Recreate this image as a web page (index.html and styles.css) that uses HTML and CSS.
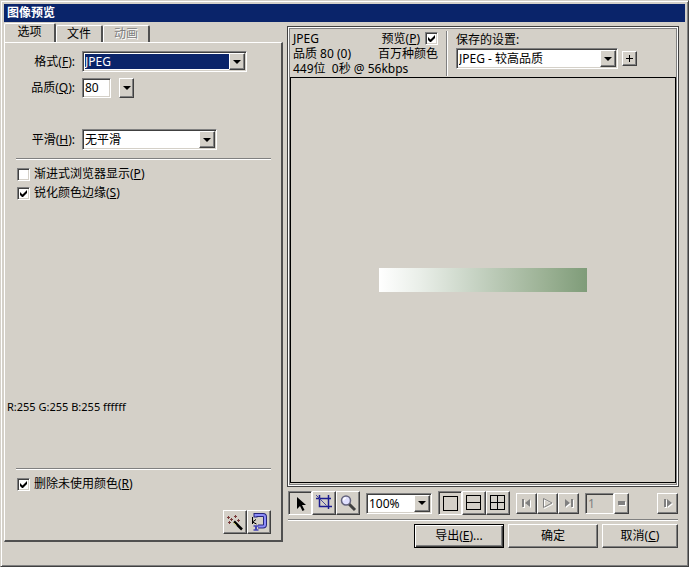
FILE: index.html
```html
<!DOCTYPE html>
<html lang="zh-CN">
<head>
	<meta charset="UTF-8">
	<title>图像预览</title>
<link rel="stylesheet" href="styles.css">
</head>
<body>
	<div class="dialog">
		<h1 class="title">图像预览</h1>
		<div class="main">
			<div class="side">
				<div class="tabs">
					<button class="tab active">选项</button>
					<button class="tab">文件</button>
					<button class="tab" disabled>动画</button>
				</div>
				<div class="panel">
					<div class="field">
						<label for="format">格式(<u>F</u>):</label>
						<div class="combo combo-format">
							<select id="format" class="selected"><option>JPEG</option></select>
							<span class="arrow"></span>
						</div>
					</div>
					<div class="field">
						<label for="quality">品质(<u>Q</u>):</label>
						<input type="text" id="quality" class="quality" value="80">
						<button class="drop" aria-label="品质"></button>
					</div>
					<div class="field field-smooth">
						<label for="smooth">平滑(<u>H</u>):</label>
						<div class="combo combo-smooth">
							<select id="smooth"><option>无平滑</option></select>
							<span class="arrow"></span>
						</div>
					</div>
					<hr>
					<label class="check"><input type="checkbox"><span>渐进式浏览器显示(<u>P</u>)</span></label>
					<label class="check"><input type="checkbox" checked><span>锐化颜色边缘(<u>S</u>)</span></label>
					<p class="rgb">R:255 G:255 B:255 ffffff</p>
					<hr>
					<label class="check"><input type="checkbox" checked><span>删除未使用颜色(<u>R</u>)</span></label>
					<div class="side-tools">
						<button class="tool" aria-label="导出向导">
							<svg width="20" height="20" viewBox="0 0 20 20">
								<path d="M2 5.500h3M3.500 4v3M9 4.500h3M10.500 3v3M5 7.500h3M6.500 6v3M12 8.500h3M13.500 7v3M3 10.500h3M4.500 9v3" stroke="#7a3b3b" fill="none"/>
								<path d="M9 9.500l8 8" stroke="#000" stroke-width="2.500"/>
								<path d="M8.500 10.500l3 3" stroke="#c8c860"/>
							</svg>
						</button>
						<button class="tool" aria-label="优化到指定大小">
							<svg width="20" height="20" viewBox="0 0 20 20">
								<path d="M6.500 5.500V3h7.500q2 0 2 2v7.500q0 2-2 2H9" fill="none" stroke="#26267c" stroke-width="4"/>
								<path d="M6.500 4.500V3h7.500q2 0 2 2v7.500q0 2-2 2H9" fill="none" stroke="#8c8cf8" stroke-width="2"/>
								<path d="M4.500 14h5M4.500 18h5" fill="none" stroke="#4646b4" stroke-width="1.500"/>
								<path d="M7 14v4" fill="none" stroke="#4646b4" stroke-width="2"/>
								<path d="M3.500 5v7M7 7.500L3.500 10L7.500 12" fill="none" stroke="#000"/>
							</svg>
						</button>
					</div>
				</div>
			</div>

			<div class="content">
				<div class="preview">
					<div class="info">
						<div class="stats">
							<div class="stat"><span>JPEG</span><label class="check-right">预览(<u>P</u>)<input type="checkbox" checked></label></div>
							<div class="stat"><span>品质 80 (0)</span><span>百万种颜色</span></div>
							<div class="stat"><span>449位&nbsp; 0秒 @ 56kbps</span></div>
						</div>
						<div class="saved">
							<label for="saved">保存的设置:</label>
							<div class="saved-row">
								<div class="combo combo-saved">
									<select id="saved"><option>JPEG - 较高品质</option></select>
									<span class="arrow"></span>
								</div>
								<button class="plus" aria-label="保存当前设置">
									<svg width="9" height="9" viewBox="0 0 9 9" shape-rendering="crispEdges"><path d="M1 4h7v1H1zM4 1h1v7H4z"/></svg>
								</button>
							</div>
						</div>
					</div>
					<div class="canvas"><div class="image"></div></div>
				</div>

				<div class="toolbar">
					<div class="group">
						<button class="tool pressed" aria-label="指针">
							<svg width="20" height="20" viewBox="0 0 20 20"><path d="M7 4v12l3-3l2.500 5l2-1l-2.500-5h4z"/></svg>
						</button>
						<button class="tool" aria-label="裁剪">
							<svg width="20" height="20" viewBox="0 0 20 20"><path d="M5.500 2v11.500H18M2 5.500h15M14.500 2v14" fill="none" stroke="#1c1c90" stroke-width="1.500"/><path d="M2 2l10.500 10.500" stroke="#4a4a9c"/></svg>
						</button>
						<button class="tool" aria-label="缩放">
							<svg width="20" height="20" viewBox="0 0 20 20"><path d="M11 11l6 6" stroke="#404040" stroke-width="3"/><circle cx="8" cy="7.500" r="4.500" fill="#e0e0ff" stroke="#62627c" stroke-width="1.500"/><path d="M5.500 7.500q0-2.500 2.500-2.500" fill="none" stroke="#fff" stroke-width="1.500"/></svg>
						</button>
					</div>
					<div class="combo combo-zoom">
						<select aria-label="缩放比例"><option>100%</option></select>
						<span class="arrow"></span>
					</div>
					<div class="group">
						<button class="tool pressed" aria-label="1 个预览窗口">
							<svg width="16" height="16" viewBox="0 0 16 16" shape-rendering="crispEdges"><path d="M1.500 1.500h14v14h-14z" fill="none" stroke="#000"/></svg>
						</button>
						<button class="tool" aria-label="2 个预览窗口">
							<svg width="16" height="16" viewBox="0 0 16 16" shape-rendering="crispEdges"><path d="M.5 .5h14v14H.5zM.5 7.500h14" fill="none" stroke="#000"/></svg>
						</button>
						<button class="tool" aria-label="4 个预览窗口">
							<svg width="16" height="16" viewBox="0 0 16 16" shape-rendering="crispEdges"><path d="M.5 .5h14v14H.5zM.5 7.500h14M7.500 .5v14" fill="none" stroke="#000"/></svg>
						</button>
					</div>
					<div class="group">
						<button class="play" disabled aria-label="第一帧">
							<svg width="12" height="12" viewBox="0 0 12 12"><path d="M2 3h2v8H2zM10 3v8L5 7z" fill="#fff"/><path d="M1 2h2v8H1zM9 2v8L4 6z"/></svg>
						</button>
						<button class="play" disabled aria-label="播放">
							<svg width="12" height="12" viewBox="0 0 12 12"><path d="M2.500 2.500v9L11 7z" fill="none" stroke="#fff"/><path d="M1.500 1.500v9L10 6z" fill="none" stroke="#808080"/></svg>
						</button>
						<button class="play" disabled aria-label="最后一帧">
							<svg width="12" height="12" viewBox="0 0 12 12"><path d="M3 3v8l5-4zM9 3h2v8H9z" fill="#fff"/><path d="M2 2v8l5-4zM8 2h2v8H8z"/></svg>
						</button>
					</div>
					<div class="group frame">
						<input type="text" value="1" disabled aria-label="帧">
						<button class="bar" disabled aria-label="选择帧"><svg width="8" height="5" viewBox="0 0 8 5"><path d="M1 1h7v4H1z" fill="#fff"/><path d="M0 0h7v4H0z"/></svg></button>
					</div>
					<button class="play last" disabled aria-label="下一帧">
						<svg width="12" height="12" viewBox="0 0 12 12"><path d="M3 3h2v8H3zM6 3v8l5-4z" fill="#fff"/><path d="M2 2h2v8H2zM5 2v8l5-4z"/></svg>
					</button>
				</div>
				<hr>
				<div class="actions">
					<button class="btn default">导出(<u>E</u>)...</button>
					<button class="btn">确定</button>
					<button class="btn cancel">取消(<u>C</u>)</button>
				</div>
			</div>
		</div>
	</div>
</body>
</html>
```
FILE: styles.css
```css
*{box-sizing: border-box;}
body,h1,p,button,input,select{padding: 0;margin: 0;}
body,button,input,select{
	font-family: "Noto Sans","Noto Sans CJK SC",sans-serif;
	font-size: 12px;
	line-height: 16px;
	color: #000;
}
body{background: #d4d0c8;}
svg{display: block;}
u{text-underline-offset: 1px;}
hr{
	width: 100%;
	margin: 0;
	border: 0;
	border-top: 1px solid #808080;
	border-bottom: 1px solid #fff;
}
.dialog{
	min-height: 100vh;
	display: flex;
	flex-direction: column;
	padding: 3px 3px 0 3px;
	border: 1px solid #d4d0c8;
	border-right-color: #404040;
	border-bottom-color: #404040;
	box-shadow: inset 1px 1px #fff, inset -1px -1px #808080;
}
.title{
	height: 18px;
	padding-left: 3px;
	line-height: 18px;
	font-size: 12px;
	font-weight: bold;
	color: #fff;
	background: #0a246a;
}
.main{
	flex: 1;
	display: flex;
	gap: 4px;
}
/* 左侧选项 */
.side{
	width: 279px;
	display: flex;
	flex-direction: column;
	padding-bottom: 24px;
}
.tabs{
	height: 20px;
	display: flex;
	align-items: flex-end;
}
.tab{
	width: 47px;
	height: 17px;
	border: 1px solid #fff;
	border-right: 2px solid #505050;
	border-bottom: 0;
	border-radius: 2px 2px 0 0;
	background: #d4d0c8;
}
.tab.active{
	width: 52px;
	height: 20px;
	margin-bottom: -1px;
	padding-bottom: 3px;
}
.tab:disabled{
	color: #808080;
	text-shadow: 1px 1px #fff;
}
.panel{
	flex: 1;
	display: flex;
	flex-direction: column;
	padding: 8px 10px 6px 11px;
	border: 1px solid #fff;
	border-right: 2px solid #505050;
	border-bottom: 2px solid #505050;
}
.field{
	height: 21px;
	display: flex;
	align-items: center;
	margin-bottom: 5px;
}
.field label{
	width: 59px;
	margin-right: 7px;
	text-align: right;
}
.field-smooth{
	margin-top: 26px;
	margin-bottom: 8px;
}
.combo,.quality,.frame input,input[type=checkbox]{
	border: 1px solid #808080;
	border-right-color: #fff;
	border-bottom-color: #fff;
	border-radius: 0;
	background: #fff;
	box-shadow: inset 1px 1px #404040, inset -1px -1px #d4d0c8;
}
.combo{
	height: 21px;
	position: relative;
	padding: 2px;
}
.combo select{
	appearance: none;
	display: block;
	width: 100%;
	height: 15px;
	padding-right: 16px;
	line-height: 15px;
	border: 0;
	border-radius: 0;
	background: #fff;
}
.combo select.selected{
	color: #fff;
	background: #0a246a;
}
.arrow,.drop,.plus,.tool,.play,.bar,.btn{
	display: flex;
	align-items: center;
	justify-content: center;
	border: 1px solid #fff;
	border-right-color: #404040;
	border-bottom-color: #404040;
	border-radius: 0;
	background: #d4d0c8;
	box-shadow: inset -1px -1px #808080;
}
.arrow{
	position: absolute;
	top: 1px;
	right: 1px;
	bottom: 1px;
	width: 16px;
	pointer-events: none;
}
.arrow::before,.drop::before{
	content: "";
	border: 4px solid transparent;
	border-top-color: #000;
	border-bottom: 0;
}
.combo-format{width: 165px;}
.combo-smooth{width: 135px;}
.combo-saved{width: 162px;}
.combo-zoom{width: 66px;}
.quality{
	width: 29px;
	height: 20px;
	padding-left: 2px;
}
.drop{
	width: 15px;
	height: 20px;
	margin-left: 8px;
}
input[type=checkbox]{
	appearance: none;
	flex: none;
	width: 13px;
	height: 13px;
}
input[type=checkbox]:checked{
	background: #fff url("data:image/svg+xml,%3Csvg xmlns='http://www.w3.org/2000/svg' width='7' height='7'%3E%3Cpath d='M0 2v3l2.500 2.500L7 3V0L2.500 4.500z'/%3E%3C/svg%3E") 2px 2px no-repeat;
}
.check{
	display: flex;
	align-items: center;
	gap: 4px;
	height: 16px;
	margin: 3px 0 0 1px;
}
.panel hr + .check{margin-top: 6px;}
.rgb{
	margin: auto 0 53px -9px;
	font-size: 11px;
}
.side-tools{
	display: flex;
	justify-content: flex-end;
	margin-top: 18px;
}
/* 右侧预览 */
.content{
	flex: 1;
	min-width: 0;
	display: flex;
	flex-direction: column;
	padding: 4px 6px 17px 0;
}
.preview{
	flex: 1;
	display: flex;
	flex-direction: column;
	padding: 0 1px 3px 1px;
	border: 1px solid #404040;
	outline: 1px solid #808080;
	outline-offset: -3px;
	box-shadow: inset 1px 1px #fff, inset -1px -1px #fff;
}
.info{
	display: flex;
	height: 50px;
	padding: 4px 0 0 4px;
}
.stats{
	width: 155px;
	height: 45px;
	padding-right: 9px;
	line-height: 15px;
	border-right: 1px solid #fff;
	box-shadow: inset -1px 0 #808080;
}
.stat{
	display: flex;
	justify-content: space-between;
	height: 15px;
}
.check-right{
	display: flex;
	align-items: center;
	white-space: pre;
}
.check-right input{margin-left: 5px;}
.saved{padding: 1px 0 0 8px;}
.saved label{display: block;}
.saved-row{
	display: flex;
	align-items: center;
	gap: 4px;
}
.plus{
	width: 15px;
	height: 15px;
}
.canvas{
	flex: 1;
	display: flex;
	align-items: center;
	justify-content: center;
	margin: 0 1px;
	border: 1px solid #000;
}
.image{
	width: 208px;
	height: 24px;
	background: linear-gradient(to right,#fff,#e9eee8 20%,#c8d4c5 45%,#9bb194 80%,#7f9c79);
}
.toolbar{
	display: flex;
	align-items: center;
	gap: 6px;
	padding: 4px 1px;
}
.toolbar .combo,.play,.frame input,.bar{height: 21px;}
.content hr{
	width: auto;
	margin: 0 1px;
}
.group{display: flex;}
.tool{
	width: 24px;
	height: 24px;
}
.tool.pressed{
	border-color: #808080 #fff #fff #808080;
	box-shadow: inset 1px 1px #404040;
}
.play{width: 21px;}
.play.last{margin-left: auto;}
.play svg,.bar svg{fill: #808080;}
.frame input{
	width: 29px;
	padding-left: 2px;
	color: #808080;
	background: #d4d0c8;
}
.bar{width: 15px;}
.actions{
	display: flex;
	justify-content: flex-end;
	align-items: center;
	gap: 4px;
	padding: 3px 1px 1px 0;
}
.btn{
	width: 90px;
	height: 24px;
}
.btn.default{
	outline: 1px solid #000;
	outline-offset: -1px;
	border-color: #000;
	box-shadow: inset 1px 1px #fff, inset -1px -1px #404040, inset -2px -2px #808080;
}
.btn.cancel{width: 76px;}
```
